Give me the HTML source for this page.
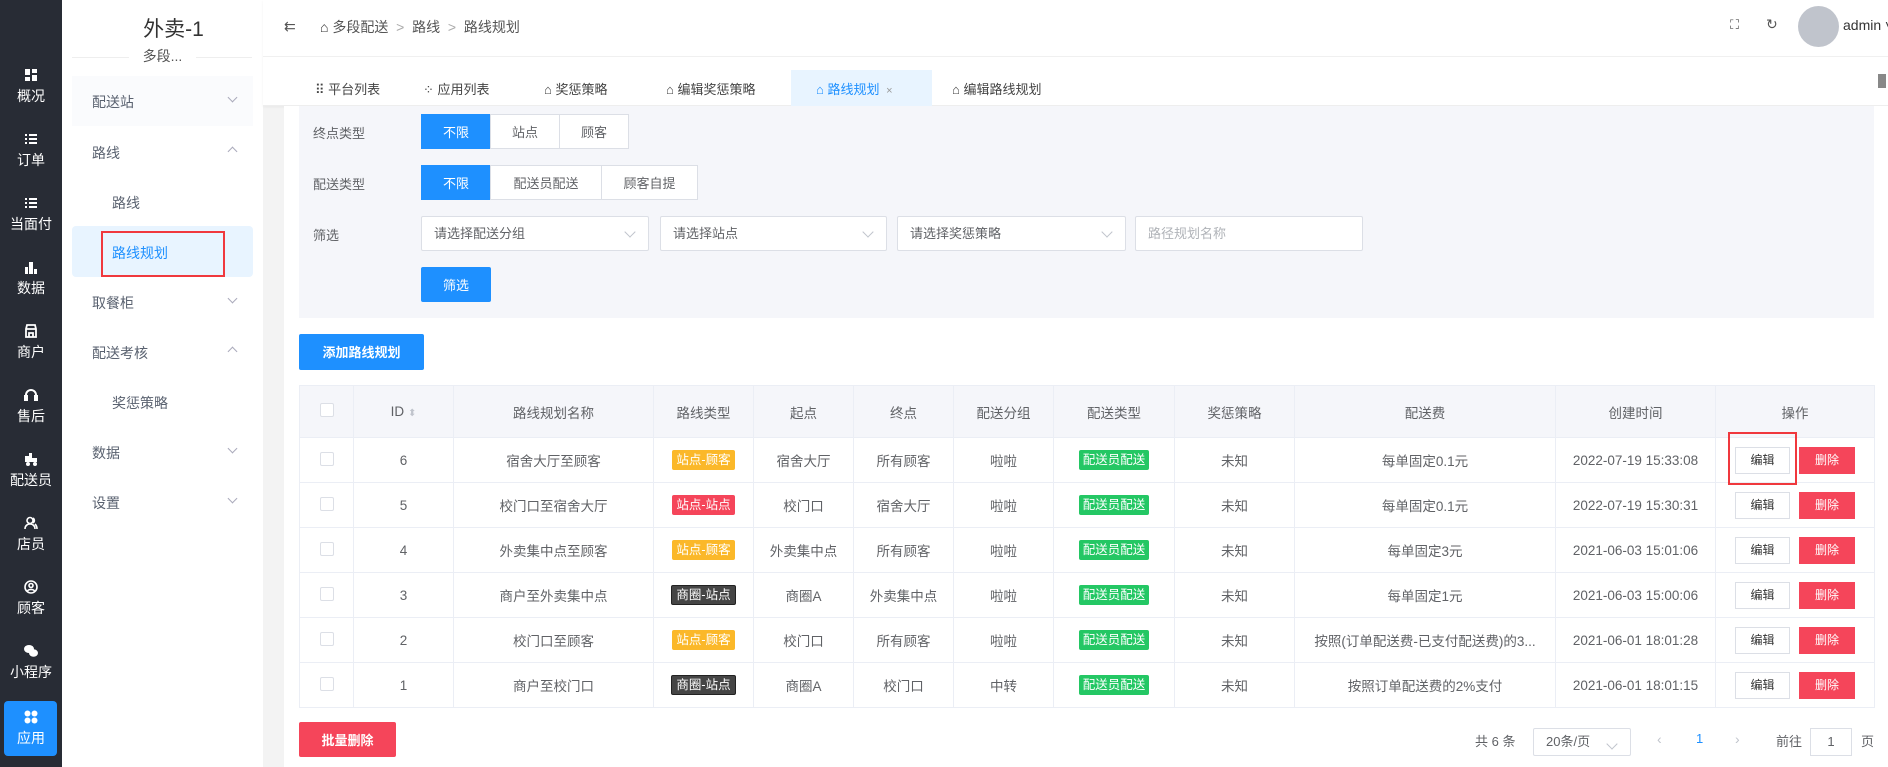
<!DOCTYPE html><html><head><meta charset="utf-8"><style>
*{box-sizing:border-box;margin:0;padding:0}
body{width:1888px;height:767px;overflow:hidden;font-family:"Liberation Sans","Noto Sans CJK SC",sans-serif;font-size:14px;color:#606266;background:#f3f3f3;position:relative}
.abs{position:absolute}
#dark{left:0;top:0;width:62px;height:767px;background:#282c35}
.di{position:absolute;left:0;width:62px;text-align:center;color:#fff;font-size:14px}
.di .ic{display:block;margin:0 auto 4px;width:14px;height:14px}
#side{left:62px;top:0;width:201px;height:767px;background:#fff}
.mi{position:absolute;left:30px;font-size:14px;color:#5a6270}
.chev{position:absolute;left:167px;width:7px;height:7px;border-right:1px solid #aab;border-bottom:1px solid #aab}
.btn{position:absolute;height:35px;line-height:35px;text-align:center;font-size:13px;border:1px solid #dcdfe6;background:#fff;color:#606266}
.pri{background:#1e90ff;color:#fff;border-color:#1e90ff}
.sel{position:absolute;height:35px;border:1px solid #dcdfe6;background:#fff;border-radius:2px;line-height:33px;padding-left:12px;font-size:13px;color:#606266}
.dd:after{content:"";position:absolute;right:14px;top:11px;width:7px;height:7px;border-right:1px solid #c0c4cc;border-bottom:1px solid #c0c4cc;transform:rotate(45deg)}
table{position:absolute;left:299px;top:385px;width:1575px;border-collapse:collapse;table-layout:fixed}
td,th{border:1px solid #ebeef5;text-align:center;font-weight:normal;font-size:13.5px;color:#606266;height:45px;white-space:nowrap;overflow:hidden}
th{background:#f5f6fa;height:52px}
.cb{display:inline-block;width:14px;height:14px;border:1px solid #dcdfe6;border-radius:2px;background:#fff}
.tag{display:inline-block;padding:0 4px;height:20px;line-height:20px;font-size:12.5px;color:#fff;border-radius:2px}
.o{background:#fbb829}.r{background:#f5455a}.k{background:#454545;border:1px solid #222;line-height:18px}.g{background:#24c764}
.eb{display:inline-block;width:55px;height:27px;line-height:25px;border:1px solid #dcdfe6;font-size:12px;color:#333;margin-right:9px}
.rb{display:inline-block;width:56px;height:27px;line-height:27px;background:#f5455a;color:#fff;font-size:12px}
.tab{position:absolute;top:79px;font-size:13px;color:#444}
</style></head><body>
<div id="dark" class="abs">
<div class="di" style="top:68px"><svg class="ic" viewBox="0 0 14 14" fill="#fff"><rect x="1" y="1" width="5" height="6"/><rect x="8" y="1" width="5" height="4"/><rect x="1" y="9" width="5" height="4"/><rect x="8" y="7" width="5" height="6"/></svg>概况</div>
<div class="di" style="top:132px"><svg class="ic" viewBox="0 0 14 14" fill="#fff"><rect x="1" y="2" width="2" height="2"/><rect x="5" y="2" width="8" height="2"/><rect x="1" y="6" width="2" height="2"/><rect x="5" y="6" width="8" height="2"/><rect x="1" y="10" width="2" height="2"/><rect x="5" y="10" width="8" height="2"/></svg>订单</div>
<div class="di" style="top:196px"><svg class="ic" viewBox="0 0 14 14" fill="#fff"><rect x="1" y="2" width="2" height="2"/><rect x="5" y="2" width="8" height="2"/><rect x="1" y="6" width="2" height="2"/><rect x="5" y="6" width="8" height="2"/><rect x="1" y="10" width="2" height="2"/><rect x="5" y="10" width="8" height="2"/></svg>当面付</div>
<div class="di" style="top:260px"><svg class="ic" viewBox="0 0 14 14" fill="#fff"><rect x="1" y="7" width="3" height="7"/><rect x="5" y="2" width="4" height="12"/><rect x="10" y="9" width="3" height="5"/></svg>数据</div>
<div class="di" style="top:324px"><svg class="ic" viewBox="0 0 14 14" fill="none" stroke="#fff" stroke-width="1.8"><path d="M2 5 3 1h8l1 4v8H2zM2 5h10M5 13V9h4v4"/></svg>商户</div>
<div class="di" style="top:388px"><svg class="ic" viewBox="0 0 14 14" fill="none" stroke="#fff" stroke-width="2"><path d="M2 9V7a5 5 0 0 1 10 0v2"/><rect x="1" y="8" width="2" height="4" fill="#fff"/><rect x="11" y="8" width="2" height="4" fill="#fff"/></svg>售后</div>
<div class="di" style="top:452px"><svg class="ic" viewBox="0 0 14 14" fill="#fff"><rect x="1" y="4" width="7" height="6"/><rect x="8" y="6" width="5" height="4"/><circle cx="4" cy="12" r="2"/><circle cx="11" cy="12" r="2"/><rect x="5" y="1" width="3" height="3"/></svg>配送员</div>
<div class="di" style="top:516px"><svg class="ic" viewBox="0 0 14 14" fill="none" stroke="#fff" stroke-width="1.6"><circle cx="6" cy="4.5" r="3"/><path d="M1 13c0-3 2-5 5-5s5 2 5 5M9 2a3 3 0 0 1 0 5M11 8c1 1 2 3 2 5"/></svg>店员</div>
<div class="di" style="top:580px"><svg class="ic" viewBox="0 0 14 14" fill="none" stroke="#fff" stroke-width="1.6"><circle cx="7" cy="7" r="6"/><circle cx="7" cy="5.5" r="2"/><path d="M3.5 11c1-2 6-2 7 0"/></svg>顾客</div>
<div class="di" style="top:644px"><svg class="ic" viewBox="0 0 14 14" fill="#fff"><ellipse cx="5" cy="5" rx="5" ry="4"/><ellipse cx="9.5" cy="9" rx="4.5" ry="3.7"/></svg>小程序</div>
<div class="abs" style="left:4px;top:701px;width:53px;height:55px;background:#1e90ff;border-radius:4px"></div>
<div class="di" style="top:710px"><svg class="ic" viewBox="0 0 14 14" fill="#fff"><circle cx="3.5" cy="3.5" r="3"/><circle cx="10.5" cy="3.5" r="3"/><circle cx="3.5" cy="10.5" r="3"/><circle cx="10.5" cy="10.5" r="3"/></svg>应用</div>
</div>
<div id="side" class="abs">
<div class="abs" style="left:0;width:201px;top:13px;text-align:center;font-size:21px;color:#333;padding-left:22px">外卖-1</div>
<div class="abs" style="left:10px;top:57px;width:180px;border-top:1px solid #eee"></div>
<div class="abs" style="left:0;width:201px;top:46px;text-align:center;font-size:14px;color:#555"><span style="background:#fff;padding:0 14px">多段...</span></div>
<div class="abs" style="left:10px;top:76px;width:181px;height:50px;background:#fafbfd"></div>
<div class="mi" style="top:92px">配送站</div><div class="chev" style="top:94px;transform:rotate(45deg)"></div>
<div class="mi" style="top:143px">路线</div><div class="chev" style="top:148px;transform:rotate(-135deg)"></div>
<div class="mi" style="top:193px;left:50px">路线</div>
<div class="abs" style="left:10px;top:226px;width:181px;height:51px;background:#e8f4ff;border-radius:4px"></div>
<div class="mi" style="top:243px;left:50px;color:#1e90ff">路线规划</div>
<div class="abs" style="left:39px;top:231px;width:124px;height:46px;border:2px solid #f0383d"></div>
<div class="mi" style="top:293px">取餐柜</div><div class="chev" style="top:295px;transform:rotate(45deg)"></div>
<div class="mi" style="top:343px">配送考核</div><div class="chev" style="top:348px;transform:rotate(-135deg)"></div>
<div class="mi" style="top:393px;left:50px">奖惩策略</div>
<div class="mi" style="top:443px">数据</div><div class="chev" style="top:445px;transform:rotate(45deg)"></div>
<div class="mi" style="top:493px">设置</div><div class="chev" style="top:495px;transform:rotate(45deg)"></div>
</div>
<div class="abs" style="left:263px;top:0;width:1625px;height:106px;background:#fff;border-bottom:1px solid #eee;box-shadow:0 1px 3px rgba(0,0,0,.05)"></div>
<div class="abs" style="left:263px;top:56px;width:1625px;border-top:1px solid #f0f0f0"></div>
<div class="abs" style="left:284px;top:18px;font-size:14px;color:#555">⇇</div>
<div class="abs" style="left:320px;top:17px;font-size:14px;color:#555"><b style="color:#333">⌂</b> 多段配送 &nbsp;<span style="color:#aaa">&gt;</span>&nbsp; 路线 &nbsp;<span style="color:#aaa">&gt;</span>&nbsp; 路线规划</div>
<div class="abs" style="left:1730px;top:17px;font-size:13px;color:#555">⛶</div>
<div class="abs" style="left:1766px;top:16px;font-size:14px;color:#555">↻</div>
<div class="abs" style="left:1798px;top:6px;width:41px;height:41px;border-radius:50%;background:#c0c4cc"></div>
<div class="abs" style="left:1843px;top:17px;font-size:14px;color:#333;white-space:nowrap">admin ˅</div>
<div class="abs" style="left:791px;top:70px;width:141px;height:36px;background:#e8f4ff"></div>
<div class="tab" style="left:315px">⠿ 平台列表</div>
<div class="tab" style="left:423px">⁘ 应用列表</div>
<div class="tab" style="left:544px">⌂ 奖惩策略</div>
<div class="tab" style="left:666px">⌂ 编辑奖惩策略</div>
<div class="tab" style="left:816px;color:#1e90ff">⌂ 路线规划 <span style="color:#999;font-size:11px">&nbsp;×</span></div>
<div class="tab" style="left:952px">⌂ 编辑路线规划</div>
<div class="abs" style="left:1878px;top:74px;width:8px;height:14px;background:#888"></div>
<div class="abs" style="left:284px;top:106px;width:1604px;height:661px;background:#fff"></div>
<div class="abs" style="left:299px;top:106px;width:1575px;height:212px;background:#f5f6fa"></div>
<div class="abs" style="left:313px;top:123px;font-size:13px">终点类型</div>
<div class="btn pri" style="left:421px;top:114px;width:70px">不限</div>
<div class="btn" style="left:490px;top:114px;width:70px">站点</div>
<div class="btn" style="left:559px;top:114px;width:70px">顾客</div>
<div class="abs" style="left:313px;top:174px;font-size:13px">配送类型</div>
<div class="btn pri" style="left:421px;top:165px;width:70px">不限</div>
<div class="btn" style="left:490px;top:165px;width:112px">配送员配送</div>
<div class="btn" style="left:601px;top:165px;width:97px">顾客自提</div>
<div class="abs" style="left:313px;top:225px;font-size:13px">筛选</div>
<div class="sel dd" style="left:421px;top:216px;width:228px">请选择配送分组</div>
<div class="sel dd" style="left:660px;top:216px;width:227px">请选择站点</div>
<div class="sel dd" style="left:897px;top:216px;width:229px">请选择奖惩策略</div>
<div class="sel" style="left:1135px;top:216px;width:228px;color:#b0b3b8;">路径规划名称</div>
<div class="btn pri" style="left:421px;top:267px;width:70px;border-radius:2px">筛选</div>
<div class="btn pri" style="left:299px;top:334px;width:125px;height:36px;font-weight:bold;border-radius:2px">添加路线规划</div>
<table>
<colgroup><col style="width:54px"><col style="width:100px"><col style="width:200px"><col style="width:100px"><col style="width:100px"><col style="width:100px"><col style="width:100px"><col style="width:121px"><col style="width:120px"><col style="width:261px"><col style="width:160px"><col style="width:159px"></colgroup>
<tr><th><span class="cb"></span></th><th>ID <span style="color:#c0c4cc;font-size:10px">⬍</span></th><th>路线规划名称</th><th>路线类型</th><th>起点</th><th>终点</th><th>配送分组</th><th>配送类型</th><th>奖惩策略</th><th>配送费</th><th>创建时间</th><th>操作</th></tr>
<tr><td><span class="cb"></span></td><td>6</td><td>宿舍大厅至顾客</td><td><span class="tag o">站点-顾客</span></td><td>宿舍大厅</td><td>所有顾客</td><td>啦啦</td><td><span class="tag g">配送员配送</span></td><td>未知</td><td>每单固定0.1元</td><td>2022-07-19 15:33:08</td><td><span class="eb">编辑</span><span class="rb">删除</span></td></tr>
<tr><td><span class="cb"></span></td><td>5</td><td>校门口至宿舍大厅</td><td><span class="tag r">站点-站点</span></td><td>校门口</td><td>宿舍大厅</td><td>啦啦</td><td><span class="tag g">配送员配送</span></td><td>未知</td><td>每单固定0.1元</td><td>2022-07-19 15:30:31</td><td><span class="eb">编辑</span><span class="rb">删除</span></td></tr>
<tr><td><span class="cb"></span></td><td>4</td><td>外卖集中点至顾客</td><td><span class="tag o">站点-顾客</span></td><td>外卖集中点</td><td>所有顾客</td><td>啦啦</td><td><span class="tag g">配送员配送</span></td><td>未知</td><td>每单固定3元</td><td>2021-06-03 15:01:06</td><td><span class="eb">编辑</span><span class="rb">删除</span></td></tr>
<tr><td><span class="cb"></span></td><td>3</td><td>商户至外卖集中点</td><td><span class="tag k">商圈-站点</span></td><td>商圈A</td><td>外卖集中点</td><td>啦啦</td><td><span class="tag g">配送员配送</span></td><td>未知</td><td>每单固定1元</td><td>2021-06-03 15:00:06</td><td><span class="eb">编辑</span><span class="rb">删除</span></td></tr>
<tr><td><span class="cb"></span></td><td>2</td><td>校门口至顾客</td><td><span class="tag o">站点-顾客</span></td><td>校门口</td><td>所有顾客</td><td>啦啦</td><td><span class="tag g">配送员配送</span></td><td>未知</td><td>按照(订单配送费-已支付配送费)的3...</td><td>2021-06-01 18:01:28</td><td><span class="eb">编辑</span><span class="rb">删除</span></td></tr>
<tr><td><span class="cb"></span></td><td>1</td><td>商户至校门口</td><td><span class="tag k">商圈-站点</span></td><td>商圈A</td><td>校门口</td><td>中转</td><td><span class="tag g">配送员配送</span></td><td>未知</td><td>按照订单配送费的2%支付</td><td>2021-06-01 18:01:15</td><td><span class="eb">编辑</span><span class="rb">删除</span></td></tr>
</table>
<div class="abs" style="left:1728px;top:432px;width:69px;height:53px;border:2px solid #f0383d"></div>
<div class="btn" style="left:299px;top:722px;width:97px;height:35px;background:#f5455a;border-color:#f5455a;color:#fff;font-weight:bold;border-radius:2px">批量删除</div>
<div class="abs" style="left:1475px;top:731px;font-size:13px">共 6 条</div>
<div class="sel dd" style="left:1533px;top:728px;width:98px;height:28px;line-height:26px;font-size:13px">20条/页</div>
<div class="abs" style="left:1657px;top:731px;color:#c0c4cc">‹</div>
<div class="abs" style="left:1696px;top:731px;color:#1e90ff;font-size:13px">1</div>
<div class="abs" style="left:1735px;top:731px;color:#c0c4cc">›</div>
<div class="abs" style="left:1776px;top:731px;font-size:13px">前往</div>
<div class="abs" style="left:1810px;top:728px;width:42px;height:28px;border:1px solid #dcdfe6;text-align:center;line-height:26px;font-size:13px">1</div>
<div class="abs" style="left:1861px;top:731px;font-size:13px">页</div>
</body></html>
